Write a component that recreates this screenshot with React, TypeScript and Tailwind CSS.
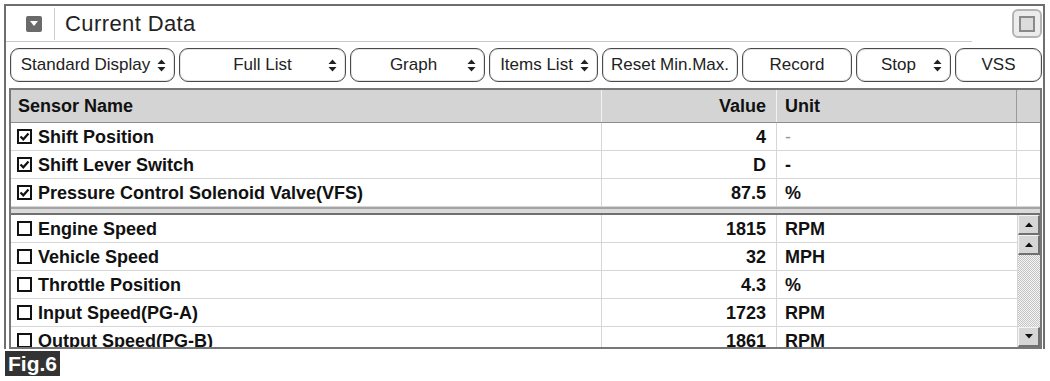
import React from 'react';

type Btn = { label: string; w: string; arrow?: boolean; shift?: string };

const buttons: Btn[] = [
  { label: 'Standard Display', w: 'w-[165px]', arrow: true, shift: 'pr-[14px]' },
  { label: 'Full List', w: 'w-[167px]', arrow: true },
  { label: 'Graph', w: 'w-[135px]', arrow: true, shift: 'pr-[8px]' },
  { label: 'Items List', w: 'w-[109px]', arrow: true, shift: 'pr-[14px]' },
  { label: 'Reset Min.Max.', w: 'w-[136px]' },
  { label: 'Record', w: 'w-[110px]' },
  { label: 'Stop', w: 'w-[95px]', arrow: true, shift: 'pr-[10px]' },
  { label: 'VSS', w: 'w-[87px]' },
];

const fixedRows = [
  { name: 'Shift Position', value: '4', unit: '-', dim: true },
  { name: 'Shift Lever Switch', value: 'D', unit: '-' },
  { name: 'Pressure Control Solenoid Valve(VFS)', value: '87.5', unit: '%' },
];

const listRows = [
  { name: 'Engine Speed', value: '1815', unit: 'RPM' },
  { name: 'Vehicle Speed', value: '32', unit: 'MPH' },
  { name: 'Throttle Position', value: '4.3', unit: '%' },
  { name: 'Input Speed(PG-A)', value: '1723', unit: 'RPM' },
  { name: 'Output Speed(PG-B)', value: '1861', unit: 'RPM' },
];

const UpDown: React.FC = () => (
  <svg width="9" height="13" viewBox="0 0 9 13">
    <path d="M4.5 0.5 L8.5 5 L0.5 5 Z" fill="#222" />
    <path d="M0.5 8 L8.5 8 L4.5 12.5 Z" fill="#222" />
  </svg>
);

const CheckBox: React.FC<{ checked?: boolean }> = ({ checked }) => (
  <svg width="15" height="15" viewBox="0 0 15 15" className="shrink-0">
    <rect x="1" y="1" width="13" height="13" fill="#fff" stroke="#111" strokeWidth="2" />
    {checked && <path d="M3.5 7.5 L6.3 10.3 L11.5 4.5" fill="none" stroke="#111" strokeWidth="2.2" />}
  </svg>
);

// 3D scrollbar button
const ScrollBtn: React.FC<{ down?: boolean }> = ({ down }) => (
  <div className="h-[20px] bg-[#d6d6d6] border-t border-l border-t-[#f4f4f4] border-l-[#f4f4f4] border-b-2 border-r-2 border-b-[#707070] border-r-[#707070] flex items-center justify-center">
    <svg width="8" height="5" viewBox="0 0 8 5">
      {down ? <path d="M0 0 L8 0 L4 4.5 Z" fill="#111" /> : <path d="M4 0.5 L8 5 L0 5 Z" fill="#111" />}
    </svg>
  </div>
);

const Row: React.FC<{ name: string; value: string; unit: string; checked?: boolean; dim?: boolean; last?: boolean }> = ({
  name,
  value,
  unit,
  checked,
  dim,
  last,
}) => (
  <div className="flex h-[28px] border-b border-[#d6d6d6] text-[18px] font-bold leading-none">
    <div className="w-[591px] flex items-center gap-[6px] pl-[6px] border-r border-[#d6d6d6]">
      <CheckBox checked={checked} />
      <span>{name}</span>
    </div>
    <div className="w-[175px] flex items-center justify-end pr-[10px] border-r border-[#d6d6d6]">{value}</div>
    <div className={`w-[240px] flex items-center pl-[8px] ${last ? '' : 'border-r border-[#d6d6d6]'}`}>
      <span className={dim ? 'text-[#999] font-normal' : ''}>{unit}</span>
    </div>
    {!last && <div className="w-[23px]" />}
  </div>
);

export default function App() {
  return (
    <div className="w-[1050px] h-[381px] bg-white pt-[4px] pl-[4px] font-['Liberation_Sans',Arial,sans-serif] text-[#111] overflow-hidden">
      <div className="w-[1041px] border-l-2 border-t-2 border-r-2 border-[#6e6e6e]">
        {/* title bar */}
        <div className="h-[35px] flex items-center">
          <div className="ml-[20px] w-[16px] h-[16px] rounded-[2px] bg-[#6a6a6a] flex items-center justify-center">
            <svg width="8" height="5" viewBox="0 0 8 5">
              <path d="M0 0 L8 0 L4 5 Z" fill="#fff" />
            </svg>
          </div>
          <div className="ml-[12px] w-px h-[32px] bg-[#d0d0d0]" />
          <div className="ml-[10px] text-[22px] tracking-[0.4px] text-[#222] leading-none">Current Data</div>
          <div className="ml-auto mr-[1px] w-[30px] h-[29px] rounded-[6px] border-2 border-[#b4b4b4] bg-[#ececec] flex items-center justify-center">
            <div className="w-[16px] h-[16px] border-2 border-[#8a8a8a] bg-[#dcdcdc]" />
          </div>
        </div>
        <div className="w-[966px] h-px bg-[#c8c8c8]" />

        {/* toolbar */}
        <div className="mt-[6px] pl-[4px] flex gap-[4px]">
          {buttons.map((b) => (
            <div
              key={b.label}
              className={`${b.w} h-[34px] relative flex items-center justify-center border border-[#4a4a4a] rounded-[9px] text-[17px] text-[#222] shadow-[inset_0_0_0_1px_#e4e4e4] ${b.shift ?? ''}`}
            >
              <span>{b.label}</span>
              {b.arrow && (
                <span className="absolute right-[8px] top-[10px]">
                  <UpDown />
                </span>
              )}
            </div>
          ))}
        </div>

        {/* table */}
        <div className="mt-[6px] ml-[3px] w-[1033px] border-2 border-[#777]">
          <div className="flex h-[33px] bg-[#d4d4d4] border-b border-[#8c8c8c] text-[18px] font-bold leading-none">
            <div className="w-[591px] flex items-center pl-[7px] border-r border-[#f2f2f2]">Sensor Name</div>
            <div className="w-[175px] flex items-center justify-end pr-[10px] border-r border-[#f2f2f2]">Value</div>
            <div className="w-[240px] flex items-center pl-[8px] border-r border-[#9a9a9a]">Unit</div>
            <div className="w-[23px]" />
          </div>
          {fixedRows.map((r) => (
            <Row key={r.name} {...r} checked />
          ))}
          <div className="h-[8px] border-t-2 border-[#a4a4a4] bg-[#dadada] border-b-2 border-b-[#707070]" />
          <div className="flex h-[132px] overflow-hidden">
            <div className="w-[1006px]">
              {listRows.map((r) => (
                <Row key={r.name} {...r} last />
              ))}
            </div>
            <div className="w-[23px] flex flex-col border-l border-[#d6d6d6]">
              <ScrollBtn />
              <ScrollBtn />
              <div className="flex-1 bg-[repeating-conic-gradient(#c4c4c4_0%_25%,#f4f4f4_0%_50%)] bg-[length:2px_2px]" />
              <ScrollBtn down />
            </div>
          </div>
        </div>
      </div>

      <div className="mt-[2px] ml-[1px] w-[55px] h-[25px] bg-[#333] flex items-center pl-[3px] text-white font-bold text-[21px] leading-none">
        Fig.6
      </div>
    </div>
  );
}
